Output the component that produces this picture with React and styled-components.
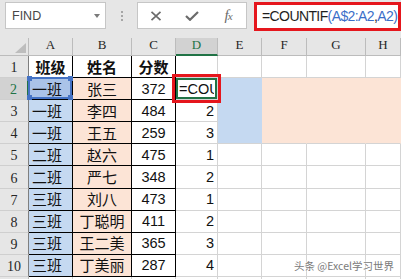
import React from 'react';
import styled, { createGlobalStyle } from 'styled-components';

const BLUE = '#c5d9f1';
const PEACH = '#fce4d6';
const GRID = '#d4d4d4';
const GREEN = '#217346';
const RED = '#e5161d';
const CJK = `'Noto Sans CJK SC', 'Noto Sans', sans-serif`;
const SANS = `'Liberation Sans', Arial, sans-serif`;
const SERIF = `'Liberation Serif', 'Times New Roman', serif`;

const widths = [29, 44, 59, 44, 42, 44, 45, 59, 35];
const letters = ['A', 'B', 'C', 'D', 'E', 'F', 'G', 'H'];

const data = [
  ['班级', '姓名', '分数', ''],
  ['一班', '张三', '372', '=COU'],
  ['一班', '李四', '484', '2'],
  ['一班', '王五', '259', '3'],
  ['二班', '赵六', '475', '1'],
  ['二班', '严七', '348', '2'],
  ['三班', '刘八', '473', '1'],
  ['三班', '丁聪明', '411', '2'],
  ['三班', '王二美', '365', '3'],
  ['三班', '丁美丽', '287', '4'],
  ['', '', '', ''],
];

const GlobalStyle = createGlobalStyle`
  html, body {
    margin: 0;
    padding: 0;
    background: #fff;
  }
  body {
    font-family: ${SANS};
    overflow: hidden;
  }
`;

const Page = styled.div`
  position: relative;
  width: 401px;
  height: 279px;
  overflow: hidden;
  background: #fff;
`;

const TopBar = styled.div`
  display: flex;
  align-items: flex-start;
  height: 38px;
  padding: 2px 0 0 5px;
  box-sizing: border-box;
  background: #e6e6e6;
`;

const NameBox = styled.div`
  width: 101px;
  height: 27px;
  box-sizing: border-box;
  background: #fff;
  border: 1px solid #c6c6c6;
  display: flex;
  align-items: center;
  justify-content: space-between;
  padding: 0 5px 0 6px;
  font-size: 12.5px;
  color: #474747;
`;

const DropArrow = styled.span`
  width: 0;
  height: 0;
  border-left: 3.5px solid transparent;
  border-right: 3.5px solid transparent;
  border-top: 4px solid #7a7a7a;
`;

const Grip = styled.div`
  display: flex;
  flex-direction: column;
  gap: 2px;
  margin: 9px 0 0 15px;
`;

const Dot = styled.span`
  width: 2px;
  height: 2px;
  background: #a6a6a6;
`;

const ButtonBox = styled.div`
  display: flex;
  width: 110px;
  height: 27px;
  margin-left: 14px;
  box-sizing: border-box;
  background: #fff;
  border: 1px solid #c6c6c6;
`;

const IconSlot = styled.div`
  width: 36px;
  display: flex;
  align-items: center;
  justify-content: center;
  color: #6b6b6b;
`;

const Fx = styled.span`
  font-family: ${SERIF};
  font-style: italic;
  font-size: 15px;
  color: #6b6b6b;
  letter-spacing: -1px;

  & small {
    font-size: 11px;
  }
`;

const FormulaInput = styled.div`
  flex: 1;
  height: 29px;
  margin-left: 7px;
  box-sizing: border-box;
  border: 3px solid ${RED};
  background: #fff;
  padding-left: 5px;
  font-size: 14px;
  line-height: 23px;
  letter-spacing: -0.6px;
  color: #1e1e1e;
  white-space: nowrap;
  overflow: hidden;
`;

const Ref = styled.span`
  color: #3a6ec8;
`;

const Sheet = styled.div`
  display: grid;
  grid-template-columns: ${widths.map((w) => `${w}px`).join(' ')};
  grid-template-rows: 18px repeat(11, 22.1px);
`;

const Corner = styled.div`
  background: #e6e6e6;
  border-right: 1px solid #bcbcbc;
  border-bottom: 1px solid #bcbcbc;
  box-sizing: border-box;
  display: flex;
  align-items: flex-end;
  justify-content: flex-end;
  padding: 0 2px 2px 0;
`;

const ColHead = styled.div`
  box-sizing: border-box;
  background: ${(p) => (p.$active ? '#d2d2d2' : '#e6e6e6')};
  border-right: 1px solid #bcbcbc;
  border-bottom: ${(p) => (p.$active ? `2px solid ${GREEN}` : '1px solid #bcbcbc')};
  color: ${(p) => (p.$active ? GREEN : '#262626')};
  font-family: ${SERIF};
  font-size: 13px;
  display: flex;
  align-items: flex-end;
  justify-content: center;
  padding-bottom: ${(p) => (p.$active ? '1px' : '2px')};
`;

const RowHead = styled.div`
  box-sizing: border-box;
  background: ${(p) => (p.$active ? '#d2d2d2' : '#e6e6e6')};
  border-right: ${(p) => (p.$active ? `2px solid ${GREEN}` : `1px solid ${p.$edge}`)};
  border-bottom: 1px solid #cfcfcf;
  color: ${(p) => (p.$active ? GREEN : '#262626')};
  font-family: ${SERIF};
  font-size: 14px;
  line-height: 14px;
  display: flex;
  align-items: flex-end;
  justify-content: center;
  padding-bottom: 2px;
`;

const Cell = styled.div`
  position: relative;
  box-sizing: border-box;
  min-width: 0;
  background: ${(p) => p.$bg};
  border-right: 1px solid ${(p) => p.$br};
  border-bottom: 1px solid ${(p) => p.$bb};
  box-shadow: ${(p) => (p.$editing ? `inset 0 0 0 2px ${GREEN}` : 'none')};
  display: flex;
  align-items: center;
  justify-content: ${(p) => p.$align};
  padding: 0 3px;
  font-family: ${(p) => (p.$cjk ? CJK : SANS)};
  font-size: ${(p) => (p.$cjk ? '15px' : '14.5px')};
  font-weight: ${(p) => (p.$bold ? 700 : 400)};
  line-height: 20px;
  color: #111;
  white-space: nowrap;
`;

const Clip = styled.span`
  display: block;
  width: 100%;
  overflow: hidden;
`;

const Annotation = styled.span`
  position: absolute;
  top: -4px;
  left: -4px;
  right: -4px;
  bottom: -4px;
  border: 3px solid ${RED};
  z-index: 3;
  pointer-events: none;
`;

const SelectFrame = styled.span`
  position: absolute;
  inset: -1px 0 0 -1px;
  border: 2px solid #4472c4;
  z-index: 2;
  pointer-events: none;
`;

const Handle = styled.span`
  position: absolute;
  width: 5px;
  height: 5px;
  background: #4472c4;
  ${(p) => (p.$top ? 'top: -3px;' : 'bottom: -3px;')}
  ${(p) => (p.$left ? 'left: -3px;' : 'right: -3px;')}
`;

const Watermark = styled.div`
  position: absolute;
  right: 7px;
  bottom: 6px;
  font-family: ${CJK};
  font-size: 10.5px;
  color: #7a7a7a;
  text-shadow: 0 0 2px #fff, 0 0 2px #fff;
  z-index: 4;
`;

const fillOf = (r, c) => {
  if (r >= 1 && r <= 9 && c === 0) return r === 1 ? '#aac3e8' : BLUE;
  if (r >= 1 && r <= 9 && c === 1) return PEACH;
  if (r >= 1 && r <= 3 && c === 4) return BLUE;
  if (r >= 1 && r <= 3 && c >= 5) return PEACH;
  return '#fff';
};

const CloseIcon = () => (
  <svg width='12' height='10' viewBox='0 0 12 10'>
    <path d='M1.5 0.8 L10.5 9.2 M10.5 0.8 L1.5 9.2' stroke='#6b6b6b' strokeWidth='1.7' fill='none' />
  </svg>
);

const CheckIcon = () => (
  <svg width='14' height='10' viewBox='0 0 14 10'>
    <path d='M1 5 L5 8.8 L13 1' stroke='#6b6b6b' strokeWidth='2.2' fill='none' />
  </svg>
);

const CornerMark = () => (
  <svg width='11' height='10' viewBox='0 0 11 10'>
    <path d='M11 0 L11 10 L0 10 Z' fill='#bdbdbd' />
  </svg>
);

const DataCell = ({ r, c, value }) => {
  const inTable = r <= 9 && c <= 2;
  const bg = fillOf(r, c);
  const filledRight = r >= 1 && r <= 3 && c >= 4;
  const br = inTable ? '#000' : filledRight ? bg : GRID;
  const bb = inTable ? '#000' : filledRight && r < 3 ? bg : GRID;
  let align = 'center';
  if (c === 0 && r > 0) align = 'flex-start';
  if (c === 3) align = r === 1 ? 'flex-start' : 'flex-end';
  const isEditing = r === 1 && c === 3;
  const isSelected = r === 1 && c === 0;

  return (
    <Cell
      $bg={bg}
      $br={br}
      $bb={bb}
      $align={align}
      $cjk={c <= 1 || r === 0}
      $bold={r === 0}
      $editing={isEditing}
    >
      {isEditing ? <Clip>{value}</Clip> : value}
      {isEditing && <Annotation />}
      {isSelected && (
        <SelectFrame>
          <Handle $top $left />
          <Handle $top />
          <Handle $left />
          <Handle />
        </SelectFrame>
      )}
    </Cell>
  );
};

const App = () => {
  return (
    <Page>
      <GlobalStyle />
      <TopBar>
        <NameBox>
          <span>FIND</span>
          <DropArrow />
        </NameBox>
        <Grip>
          <Dot />
          <Dot />
          <Dot />
        </Grip>
        <ButtonBox>
          <IconSlot>
            <CloseIcon />
          </IconSlot>
          <IconSlot>
            <CheckIcon />
          </IconSlot>
          <IconSlot>
            <Fx>
              f<small>x</small>
            </Fx>
          </IconSlot>
        </ButtonBox>
        <FormulaInput>
          =COUNTIF<Ref>(A$2:A2</Ref>,<Ref>A2)</Ref>
        </FormulaInput>
      </TopBar>
      <Sheet>
        <Corner>
          <CornerMark />
        </Corner>
        {letters.map((l) => (
          <ColHead key={l} $active={l === 'D'}>
            {l}
          </ColHead>
        ))}
        {data.map((row, r) => (
          <React.Fragment key={r}>
            <RowHead $active={r === 1} $edge={r <= 9 ? '#7f7f7f' : '#bcbcbc'}>
              {r + 1}
            </RowHead>
            {letters.map((l, c) => (
              <DataCell key={l} r={r} c={c} value={row[c] || ''} />
            ))}
          </React.Fragment>
        ))}
      </Sheet>
      <Watermark>头条 @Excel学习世界</Watermark>
    </Page>
  );
};

export default App;
